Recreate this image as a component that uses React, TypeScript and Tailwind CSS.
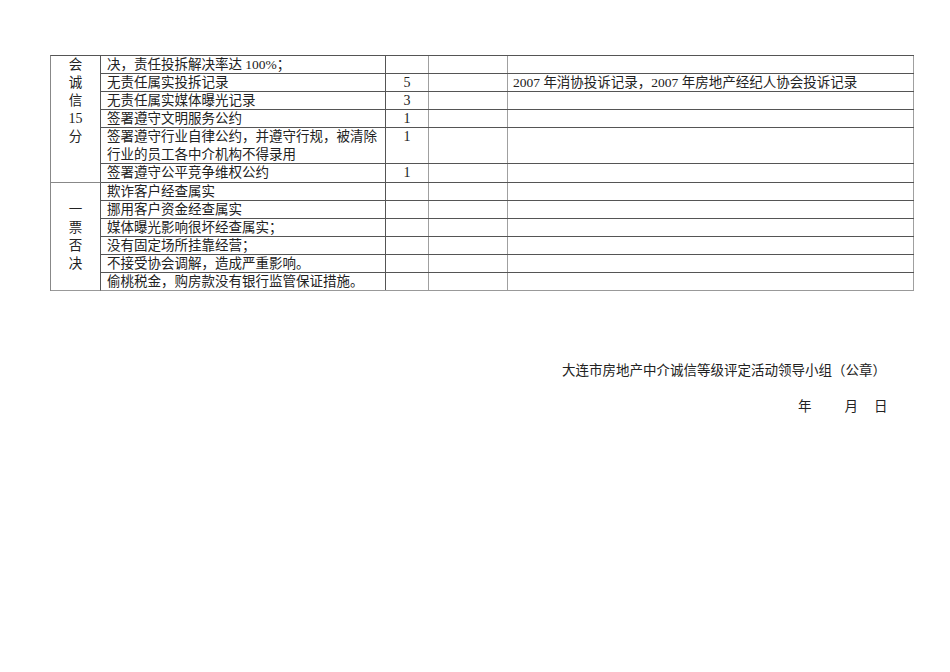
import React from "react";

const dark = "border-[#555]";

type Row = { text: React.ReactNode; score?: string; note?: string; h: string; top?: boolean };

const rows: Row[] = [
  { text: "决，责任投拆解决率达 100%；", h: "h-[18px]" },
  { text: "无责任属实投拆记录", score: "5", note: "2007 年消协投诉记录，2007 年房地产经纪人协会投诉记录", h: "h-[18px]" },
  { text: "无责任属实媒体曝光记录", score: "3", h: "h-[18px]" },
  { text: "签署遵守文明服务公约", score: "1", h: "h-[18px]" },
  {
    text: (
      <>
        签署遵守行业自律公约，并遵守行规，被清除
        <br />
        行业的员工各中介机构不得录用
      </>
    ),
    score: "1",
    h: "h-[36px]",
    top: true,
  },
  { text: "签署遵守公平竞争维权公约", score: "1", h: "h-[19px]" },
  { text: "欺诈客户经查属实", h: "h-[18px]" },
  { text: "挪用客户资金经查属实", h: "h-[18px]" },
  { text: "媒体曝光影响很坏经查属实；", h: "h-[18px]" },
  { text: "没有固定场所挂靠经营；", h: "h-[18px]" },
  { text: "不接受协会调解，造成严重影响。", h: "h-[18px]" },
  { text: "偷桃税金，购房款没有银行监管保证措施。", h: "h-[18px]" },
];

export default function App() {
  return (
    <div
      className="w-[950px] h-[672px] bg-white text-[#222] text-[13.5px] leading-[18px]"
      style={{ fontFamily: '"Liberation Serif", "Noto Sans CJK SC", serif' }}
    >
      <div className="pt-[55px] pl-[50px]">
        <div className="flex w-[864px] border-t border-l border-t-[#555] border-l-[#888]">
          {/* left group column */}
          <div className="flex flex-col w-[50px] shrink-0">
            <div className={`h-[127px] border-r border-b ${dark} border-b-[#888] flex flex-col items-center`}>
              <span>会</span>
              <span>诚</span>
              <span>信</span>
              <span className="text-[14px]">15</span>
              <span>分</span>
            </div>
            <div className={`h-[108px] border-r border-b ${dark} border-b-[#999] flex flex-col items-center justify-center`}>
              <span>一</span>
              <span>票</span>
              <span>否</span>
              <span>决</span>
            </div>
          </div>
          {/* rows */}
          <div className="flex flex-col flex-1">
            {rows.map((r, i) => (
              <div
                key={i}
                className={`flex ${r.h} border-b ${i === rows.length - 1 ? "border-b-[#999]" : dark}`}
              >
                <div className={`w-[285px] shrink-0 border-r ${dark} pl-[6px] whitespace-nowrap ${r.top ? "" : "flex items-center"}`}>
                  <span>{r.text}</span>
                </div>
                <div className={`w-[43px] shrink-0 border-r border-[#a0a0a0] text-center text-[14px] ${r.top ? "" : "flex items-center justify-center"}`}>
                  {r.score ?? ""}
                </div>
                <div className={`w-[79px] shrink-0 border-r ${dark}`}></div>
                <div className={`flex-1 border-l border-[#a0a0a0] -ml-px border-r ${dark} pl-[5px] flex items-center whitespace-nowrap`}>
                  {r.note ?? ""}
                </div>
              </div>
            ))}
          </div>
        </div>
      </div>
      <div className="mt-[71px] pl-[562px] whitespace-nowrap">大连市房地产中介诚信等级评定活动领导小组（公章）</div>
      <div className="mt-[18px] pl-[798px] flex">
        <span>年</span>
        <span className="ml-[33px]">月</span>
        <span className="ml-[16px]">日</span>
      </div>
    </div>
  );
}
